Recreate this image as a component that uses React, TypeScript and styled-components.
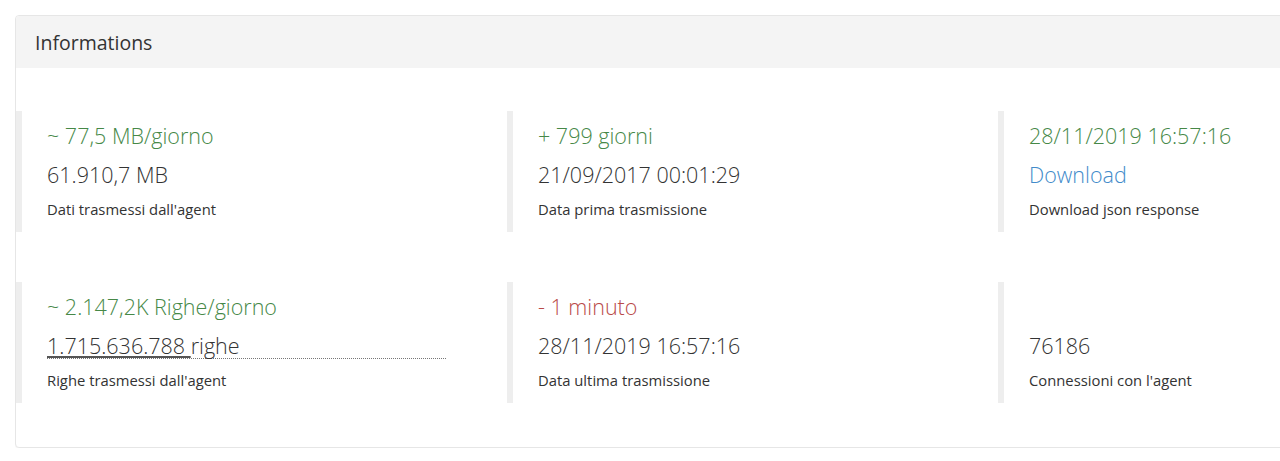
import React from "react";
import styled, { createGlobalStyle } from "styled-components";

const Global = createGlobalStyle`
  html, body { margin: 0; padding: 0; background: #fff; overflow: hidden; }
  body { font-family: "Open Sans", "Liberation Sans", sans-serif; color: #333; }
`;

const Page = styled.div`
  padding: 15px 0 0 15px;
  width: 1600px;
`;

const Card = styled.section`
  width: 1474px;
  border: 1px solid #e6e6e6;
  border-radius: 4px;
  background: #fff;
  box-shadow: 0 1px 1px rgba(0, 0, 0, 0.03);
`;

const Header = styled.header`
  background: #f4f4f4;
  padding: 0 19px;
  height: 52px;
  display: flex;
  align-items: center;
  border-radius: 4px 4px 0 0;
`;

const Title = styled.h3`
  margin: 0;
  font-size: 19.5px;
  font-weight: 400;
  color: #333;
`;

const Body = styled.div`
  display: grid;
  grid-template-columns: repeat(3, 491px);
  row-gap: 50px;
  padding: 43px 0 44px 0;
`;

const Stat = styled.div`
  border-left: 6px solid #eeeeee;
  padding: 10px 0 13px 25px;
  display: flex;
  flex-direction: column;
`;

const Trend = styled.div<{ $tone: "up" | "down" }>`
  font-size: 21.5px;
  line-height: 30px;
  height: 30px;
  font-weight: 300;
  color: ${(p) => (p.$tone === "down" ? "#b94a48" : "#468847")};
`;

const Value = styled.div`
  margin-top: 9px;
  font-size: 21.5px;
  line-height: 30px;
  font-weight: 300;
  color: #333;
`;

const Dotted = styled.span`
  display: inline-block;
  width: 399px;
  line-height: 25px;
  border-bottom: 1px dotted #777;
`;

const Under = styled.span`
  text-decoration: underline;
  text-decoration-color: #555;
  text-underline-offset: 2px;
  white-space: pre;
`;

const Link = styled.a`
  color: #428bca;
  text-decoration: none;
`;

const Label = styled.div`
  margin-top: 9px;
  font-size: 14.8px;
  line-height: 20px;
  color: #333;
`;

export default function App() {
  return (
    <>
      <Global />
      <Page>
        <Card>
          <Header>
            <Title>Informations</Title>
          </Header>
          <Body>
            <Stat>
              <Trend $tone="up">~ 77,5 MB/giorno</Trend>
              <Value>61.910,7 MB</Value>
              <Label>Dati trasmessi dall'agent</Label>
            </Stat>
            <Stat>
              <Trend $tone="up">+ 799 giorni</Trend>
              <Value>21/09/2017 00:01:29</Value>
              <Label>Data prima trasmissione</Label>
            </Stat>
            <Stat>
              <Trend $tone="up">28/11/2019 16:57:16</Trend>
              <Value>
                <Link href="#">Download</Link>
              </Value>
              <Label>Download json response</Label>
            </Stat>
            <Stat>
              <Trend $tone="up">~ 2.147,2K Righe/giorno</Trend>
              <Value>
                <Dotted>
                  <Under>1.715.636.788 </Under>righe
                </Dotted>
              </Value>
              <Label>Righe trasmessi dall'agent</Label>
            </Stat>
            <Stat>
              <Trend $tone="down">- 1 minuto</Trend>
              <Value>28/11/2019 16:57:16</Value>
              <Label>Data ultima trasmissione</Label>
            </Stat>
            <Stat>
              <Trend $tone="up"></Trend>
              <Value>76186</Value>
              <Label>Connessioni con l'agent</Label>
            </Stat>
          </Body>
        </Card>
      </Page>
    </>
  );
}
